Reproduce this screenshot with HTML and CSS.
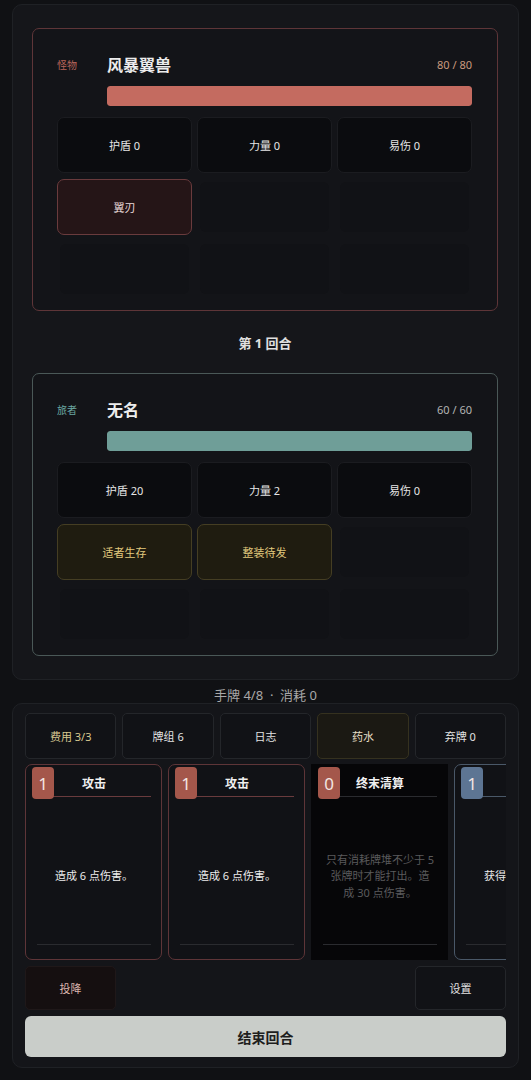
FILE: index.html
```html
<!DOCTYPE html>
<html lang="zh-CN">
<head>
<meta charset="utf-8">
<title>战斗</title>
<link rel="stylesheet" href="styles.css">
</head>
<body>
<div class="app">
  <section class="battle">
    <div class="unit unit-enemy">
      <div class="unit-head">
        <span class="unit-tag">怪物</span>
        <span class="unit-name">风暴翼兽</span>
        <span class="unit-hp">80 / 80</span>
      </div>
      <div class="hpbar"><div class="hpfill" style="width:100%"></div></div>
      <div class="grid">
        <div class="cell stat">护盾 0</div>
        <div class="cell stat">力量 0</div>
        <div class="cell stat">易伤 0</div>
        <div class="cell intent">翼刃</div>
        <div class="cell empty"></div>
        <div class="cell empty"></div>
        <div class="cell empty"></div>
        <div class="cell empty"></div>
        <div class="cell empty"></div>
      </div>
    </div>
    <div class="round">第 1 回合</div>
    <div class="unit unit-player">
      <div class="unit-head">
        <span class="unit-tag">旅者</span>
        <span class="unit-name">无名</span>
        <span class="unit-hp">60 / 60</span>
      </div>
      <div class="hpbar"><div class="hpfill" style="width:100%"></div></div>
      <div class="grid">
        <div class="cell stat">护盾 20</div>
        <div class="cell stat">力量 2</div>
        <div class="cell stat">易伤 0</div>
        <div class="cell buff">适者生存</div>
        <div class="cell buff">整装待发</div>
        <div class="cell empty"></div>
        <div class="cell empty"></div>
        <div class="cell empty"></div>
        <div class="cell empty"></div>
      </div>
    </div>
  </section>

  <div class="hand-info">手牌 4/8 &nbsp;·&nbsp; 消耗 0</div>

  <section class="deck">
    <div class="toolbar">
      <div class="btn btn-cost">费用 3/3</div>
      <div class="btn">牌组 6</div>
      <div class="btn">日志</div>
      <div class="btn btn-potion">药水</div>
      <div class="btn">弃牌 0</div>
    </div>
    <div class="hand">
      <div class="card card-attack">
        <div class="cost">1</div>
        <div class="card-title">攻击</div>
        <div class="card-desc">造成 6 点伤害。</div>
        <div class="card-foot"></div>
      </div>
      <div class="card card-attack">
        <div class="cost">1</div>
        <div class="card-title">攻击</div>
        <div class="card-desc">造成 6 点伤害。</div>
        <div class="card-foot"></div>
      </div>
      <div class="card card-disabled">
        <div class="cost">0</div>
        <div class="card-title">终末清算</div>
        <div class="card-desc">只有消耗牌堆不少于 5 张牌时才能打出。造成 30 点伤害。</div>
        <div class="card-foot"></div>
      </div>
      <div class="card card-skill">
        <div class="cost">1</div>
        <div class="card-title">防御</div>
        <div class="card-desc">获得 5 点护盾。</div>
        <div class="card-foot"></div>
      </div>
    </div>
    <div class="actions">
      <div class="btn btn-surrender">投降</div>
      <div class="btn">设置</div>
    </div>
    <div class="end-turn">结束回合</div>
  </section>
</div>
</body>
</html>
```

FILE: styles.css
```css
* { box-sizing: border-box; }

html, body {
  margin: 0;
  background: #101114;
  font-family: "Noto Sans", "Noto Sans CJK SC", sans-serif;
  color: #e4e4e4;
}

.app {
  padding: 4px 12px 12px;
}

.battle {
  background: #15161a;
  border: 1px solid #1f2125;
  border-radius: 10px;
  padding: 23px 20px 23px 19px;
}

.unit {
  height: 283px;
  border: 1px solid #5e3538;
  border-radius: 7px;
  background: #131418;
  padding: 23px 25px 13px 24px;
}
.unit-player { border-color: #4a5857; }

.unit-head {
  display: flex;
  align-items: center;
  height: 24px;
}
.unit-tag {
  width: 50px;
  font-size: 10px;
  color: #b8655a;
}
.unit-player .unit-tag { color: #6aa6a0; }
.unit-name {
  flex: 1;
  font-size: 16px;
  font-weight: 700;
  color: #ececec;
}
.unit-hp {
  font-size: 11px;
  color: #c99a7e;
}
.unit-player .unit-hp { color: #b4b4b4; }

.hpbar {
  margin: 10px 0 0 50px;
  height: 20px;
  border-radius: 3px;
  background: #222;
  overflow: hidden;
}
.hpfill {
  height: 100%;
  background: #c46b60;
  border-radius: 3px;
}
.unit-player .hpfill { background: #6f9e98; }

.grid {
  margin-top: 11px;
  display: grid;
  grid-template-columns: repeat(3, 1fr);
  grid-template-rows: repeat(3, 56px);
  gap: 6px 5px;
}
.cell {
  display: flex;
  align-items: center;
  justify-content: center;
  font-size: 11px;
  border-radius: 7px;
}
.stat {
  background: #0b0c0f;
  border: 1px solid #1b1c20;
  color: #e6e6e6;
}
.intent {
  background: #251517;
  border: 1px solid #6a3b3d;
  color: #eadada;
}
.buff {
  background: #1f1c10;
  border: 1px solid #453e23;
  color: #e2ca7e;
}
.empty {
  margin: 3px;
  background: #111216;
  border-radius: 6px;
}

.round {
  height: 62px;
  display: flex;
  align-items: center;
  justify-content: center;
  font-size: 13px;
  font-weight: 700;
  color: #e0e0e0;
}

.hand-info {
  padding-top: 7px;
  line-height: 16px;
  height: 23px;
  text-align: center;
  font-size: 13px;
  color: #a8a8a8;
}

.deck {
  background: #141519;
  border: 1px solid #1f2125;
  border-radius: 10px;
  padding: 9px 12px 10px;
}

.toolbar {
  display: grid;
  grid-template-columns: repeat(5, 1fr);
  gap: 6px;
  height: 46px;
}
.btn {
  display: flex;
  align-items: center;
  justify-content: center;
  font-size: 11px;
  color: #e2e2e2;
  background: #111216;
  border: 1px solid #24262a;
  border-radius: 5px;
}
.btn-cost { color: #d8c890; }
.btn-potion {
  background: #1b1913;
  border-color: #35311f;
  color: #e6dec6;
}

.hand {
  margin-top: 5px;
  height: 196px;
  display: flex;
  gap: 6px;
  overflow: hidden;
}
.card {
  position: relative;
  flex: 0 0 137px;
  display: flex;
  flex-direction: column;
  padding: 5px 10px 0 11px;
  background: #111216;
  border: 1px solid #5e3538;
  border-radius: 7px;
}
.card-disabled {
  background: #060608;
  border-color: #060608;
  border-radius: 0;
}
.card-skill { border-color: #4a5868; }

.cost {
  position: absolute;
  left: 6px;
  top: 2px;
  width: 22px;
  height: 32px;
  border-radius: 4px;
  background: #a4574b;
  color: #f3e6e2;
  font-size: 17px;
  display: flex;
  align-items: center;
  justify-content: center;
}
.card-skill .cost { background: #5d7593; }

.card-title {
  height: 27px;
  display: flex;
  align-items: center;
  justify-content: center;
  font-size: 12px;
  font-weight: 700;
  color: #f0f0f0;
  border-bottom: 1px solid #6a3b3d;
}
.card-disabled .card-title { border-bottom-color: #2a2b2f; }
.card-skill .card-title { border-bottom-color: #4a5868; }

.card-desc {
  flex: 1;
  display: flex;
  align-items: center;
  justify-content: center;
  text-align: center;
  padding: 12px 2.5px 0;
  font-size: 11px;
  line-height: 16.5px;
  color: #ececec;
}
.card-disabled .card-desc { color: #5a5a5c; }

.card-foot {
  height: 15px;
  border-top: 1px solid #2a2b2f;
}

.actions {
  margin-top: 6px;
  display: flex;
  justify-content: space-between;
  height: 44px;
}
.actions .btn { width: 91px; }
.btn-surrender {
  background: #150f10;
  border-color: #1f1819;
  color: #dbb6ae;
}

.end-turn {
  margin-top: 6px;
  height: 41px;
  border-radius: 6px;
  background: #c9cdc9;
  color: #1e1e1e;
  font-size: 14px;
  font-weight: 700;
  display: flex;
  align-items: center;
  justify-content: center;
}
```
